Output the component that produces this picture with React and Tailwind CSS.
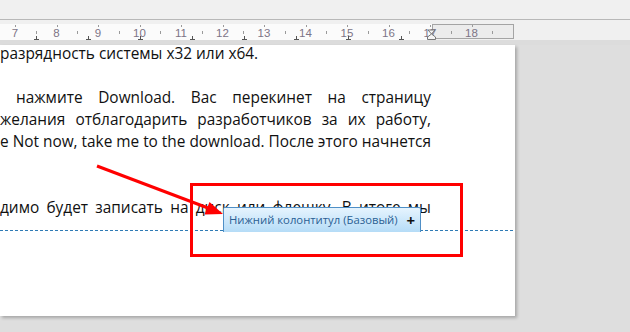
import React from "react";

const nums = [7, 8, 9, 10, 11, 12, 13, 14, 15, 16, 17, 18];
const tabs = [36, 88, 140, 192, 244, 296, 348, 401];

function Line({ words, className = "" }) {
  return (
    <div className={"flex h-[22px] items-center justify-between whitespace-nowrap " + className}>
      {words.map((w, i) => (
        <span key={i}>{w}</span>
      ))}
    </div>
  );
}

export default function App() {
  return (
    <div className="w-[630px] h-[332px] overflow-hidden bg-[#dedede] flex flex-col" style={{ fontFamily: '"Open Sans", "Noto Sans", sans-serif' }}>
      {/* top bar */}
      <div className="h-[20px] bg-[#f0f0f0] border-b border-[#b8b8b8] shrink-0" />
      {/* ruler */}
      <div className="h-[20px] bg-[#f0f0f0] shrink-0 flex">
        <div className="relative w-[514px] h-full">
          <div className="absolute left-0 top-[4px] w-[432px] h-[16px] bg-[#fbfbfb]" />
          <div className="absolute left-[432px] top-[4px] w-[82px] h-[15px] bg-[#ececec] border border-[#a4a4a4]" />
          {nums.map((n, i) => {
            const x = 15 + i * 41.5;
            return (
              <div key={n} className="absolute top-[6px] h-[14px] flex justify-center w-[20px] text-[11.5px] leading-[14px] text-[#7d7486]" style={{ left: x - 10, fontFamily: '"Liberation Sans", sans-serif' }}>
                {n}
              </div>
            );
          })}
          {nums.map((n, i) => {
            const x = 15 + i * 41.5;
            return (
              <React.Fragment key={"t" + n}>
                <div className="absolute top-[5px] w-px h-[2px] bg-[#9a9a9a]" style={{ left: Math.round(x) }} />
                <div className="absolute top-[11px] w-px h-[3px] bg-[#9a9a9a]" style={{ left: Math.round(x + 20.75) }} />
              </React.Fragment>
            );
          })}
          {tabs.map((x) => (
            <div key={x} className="absolute top-[16px] h-[4px] w-[5px]" style={{ left: x - 2 }}>
              <div className="absolute left-[2px] top-0 w-px h-[3px] bg-[#555]" />
              <div className="absolute left-0 top-[3px] w-[5px] h-px bg-[#555]" />
            </div>
          ))}
          <svg className="absolute left-[426px] top-[9px]" width="11" height="11" viewBox="0 0 11 11">
            <polygon points="2,1 9,1 5.5,5" fill="#f4f4f4" stroke="#777" strokeWidth="1" />
            <polygon points="5.5,5 9.5,8 9.5,10.5 1.5,10.5 1.5,8" fill="#f4f4f4" stroke="#777" strokeWidth="1" />
          </svg>
        </div>
      </div>
      <div className="h-[5px] shrink-0 bg-[#dcdcdc]" />
      {/* page area */}
      <div className="flex flex-1 min-h-0">
        <div className="relative w-[515px] h-[271px] bg-white shadow-[2px_2px_3px_rgba(0,0,0,0.25)] shrink-0 text-[15.4px] text-[#111]">
          <div className="w-[431px] -mt-[2px]">
            <Line words={["разрядность системы x32 или x64."]} className="justify-start" />
            <div className="h-[22px]" />
            <Line words={["нажмите", "Download.", "Вас", "перекинет", "на", "страницу"]} className="pl-[16px]" />
            <Line words={["желания", "отблагодарить", "разработчиков", "за", "их", "работу,"]} />
            <Line words={["e", "Not", "now,", "take", "me", "to", "the", "download.", "После", "этого", "начнется"]} />
            <div className="h-[44px]" />
            <Line words={["димо", "будет", "записать", "на", "диск", "или", "флешку.", "В", "итоге", "мы"]} />
          </div>
          <div className="mt-[11px] h-px w-full bg-[repeating-linear-gradient(90deg,#2f7bb5_0_3px,transparent_3px_5px)]" />

          {/* footer tag */}
          <div className="absolute left-[223px] top-[162px] w-[198px] h-[25px] border border-b-0 border-[#4f8fc6] rounded-t-[2px] bg-gradient-to-b from-[#e6f4fe] to-[#b5dcf7] flex items-center justify-between pl-[5px] pr-[5px]">
            <span className="text-[11.3px] text-[#2a5f93] whitespace-nowrap" style={{ fontFamily: '"Open Sans", sans-serif' }}>Нижний колонтитул (Базовый)</span>
            <span className="text-[15px] font-bold text-[#111] leading-none">+</span>
          </div>

          {/* red box annotation */}
          <div className="absolute left-[190px] top-[138px] w-[273px] h-[74px] border-[3px] border-[#ff0000]" />

          {/* red arrow */}
          <svg className="absolute left-0 top-0 pointer-events-none" width="515" height="271" viewBox="0 45 515 271">
            <line x1="97" y1="166" x2="208" y2="208" stroke="#ff0000" strokeWidth="3" />
            <polygon points="223,214 204.5,214.5 209.5,202" fill="#ff0000" />
          </svg>
        </div>
      </div>
    </div>
  );
}
